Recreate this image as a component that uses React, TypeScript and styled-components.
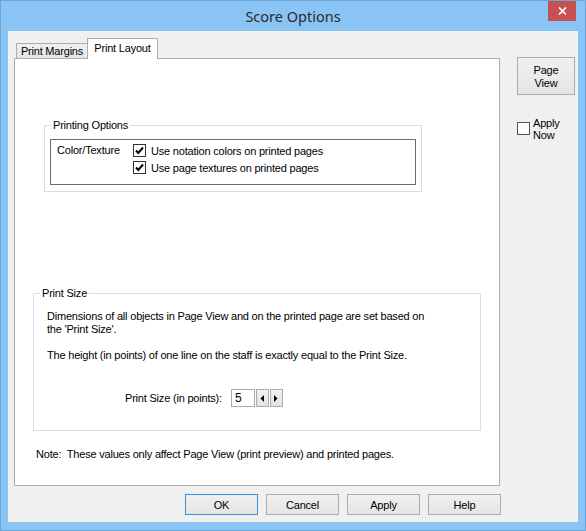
import React from 'react';
import styled, { createGlobalStyle } from 'styled-components';

const GlobalStyle = createGlobalStyle`
  html, body { margin: 0; padding: 0; background: #8ac4f5; }
  body { font-family: "Liberation Sans", Arial, sans-serif; font-size: 11px; color: #000; }
  * { box-sizing: border-box; }
`;

const Window = styled.div`
  width: 586px;
  height: 531px;
  background: #8ac4f5;
  border: 1px solid #6aa5da;
  padding: 0 7px 8px 7px;
  display: flex;
  flex-direction: column;
`;

const TitleBar = styled.div`
  height: 30px;
  display: grid;
  grid-template-columns: 1fr auto 1fr;
  align-items: start;
`;

const Title = styled.div`
  grid-column: 2;
  font-family: "Noto Sans", "Open Sans", sans-serif;
  font-size: 14.5px;
  line-height: 30px;
  color: #2b2b2b;
`;

const CloseButton = styled.div`
  grid-column: 3;
  justify-self: end;
  margin-right: 2px;
  width: 28px;
  height: 20px;
  background: #c75050;
  display: flex;
  align-items: center;
  justify-content: center;
`;

const Client = styled.div`
  flex: 1;
  background: #f0f0f0;
  display: flex;
  gap: 16px;
  padding: 7px 3px 7px 6px;
`;

const MainColumn = styled.div`
  width: 487px;
  display: flex;
  flex-direction: column;
`;

const TabStrip = styled.div`
  height: 21px;
  margin-bottom: -1px;
  padding-left: 2px;
  display: flex;
  align-items: flex-end;
  position: relative;
  z-index: 1;
`;

const Tab = styled.div<{ $active?: boolean }>`
  height: ${p => (p.$active ? '21px' : '15px')};
  width: ${p => (p.$active ? '71px' : '72px')};
  margin-left: ${p => (p.$active ? '-1px' : '0')};
  margin-bottom: ${p => (p.$active ? '0' : '1px')};
  border: 1px solid #acacac;
  border-bottom: none;
  background: ${p => (p.$active ? '#ffffff' : 'linear-gradient(#f0f0f0, #e5e5e5)')};
  display: flex;
  align-items: center;
  justify-content: center;
  letter-spacing: -0.2px;
  padding-bottom: ${p => (p.$active ? '2px' : '0')};
`;

const Panel = styled.div`
  width: 486px;
  height: 428px;
  background: #ffffff;
  border: 1px solid #acacac;
  display: flex;
  flex-direction: column;
  align-items: flex-start;
`;

const Group = styled.fieldset<{ $left: number; $top: number; $width: number; $height?: number }>`
  margin: ${p => p.$top}px 0 0 ${p => p.$left}px;
  width: ${p => p.$width}px;
  ${p => (p.$height ? `height: ${p.$height}px;` : '')}
  padding: 0;
  border: 1px solid #dcdcdc;
  min-width: 0;
`;

const Legend = styled.legend`
  margin-left: 6px;
  padding: 0 2px;
  line-height: 14px;
  letter-spacing: -0.2px;
`;

const OptionsBox = styled.div`
  margin: 7px 0 6px 5px;
  width: 366px;
  height: 46px;
  border: 1px solid #6d6d6d;
  padding: 2px 0 0 6px;
  display: grid;
  grid-template-columns: 76px 1fr;
`;

const BoxLabel = styled.div`
  line-height: 17px;
  letter-spacing: -0.2px;
`;

const CheckList = styled.div`
  display: flex;
  flex-direction: column;
`;

const CheckRow = styled.label`
  height: 17px;
  display: flex;
  align-items: center;
  gap: 5px;
  letter-spacing: -0.2px;
`;

const Box = styled.span`
  width: 13px;
  height: 13px;
  border: 1px solid #333333;
  background: #ffffff;
  display: inline-flex;
  align-items: center;
  justify-content: center;
  flex: none;
`;

const SizeBody = styled.div`
  padding: 10px 13px 0 13px;
`;

const Para = styled.p<{ $gap?: number }>`
  margin: ${p => p.$gap ?? 0}px 0 0 0;
  line-height: 13px;
  letter-spacing: -0.2px;
  white-space: pre-line;
`;

const SizeRow = styled.div`
  margin: 27px 0 0 78px;
  height: 18px;
  display: flex;
  align-items: center;
`;

const SizeLabel = styled.span`
  letter-spacing: -0.2px;
  margin-right: 9px;
`;

const NumberBox = styled.div`
  width: 24px;
  height: 18px;
  border: 1px solid #acacac;
  background: #ffffff;
  font-size: 12px;
  line-height: 16px;
  padding-left: 3px;
`;

const SpinButton = styled.div`
  width: 13px;
  height: 18px;
  margin-left: 1px;
  border: 1px solid #acacac;
  background: linear-gradient(#f2f2f2, #e3e3e3);
  display: flex;
  align-items: center;
  justify-content: center;
`;

const Note = styled.div`
  margin: 17px 0 0 21px;
  line-height: 13px;
  letter-spacing: -0.2px;
`;

const ButtonRow = styled.div`
  margin-top: 8px;
  display: flex;
  justify-content: flex-end;
  gap: 8px;
`;

const Button = styled.div<{ $default?: boolean }>`
  width: 73px;
  height: 21px;
  border: 1px solid ${p => (p.$default ? '#3c8fdc' : '#acacac')};
  background: linear-gradient(#f0f0f0, #e5e5e5);
  display: flex;
  align-items: center;
  justify-content: center;
  letter-spacing: -0.2px;
`;

const SideColumn = styled.div`
  padding-top: 19px;
  display: flex;
  flex-direction: column;
`;

const TallButton = styled.div`
  width: 58px;
  height: 38px;
  border: 1px solid #acacac;
  background: linear-gradient(#f0f0f0, #e5e5e5);
  display: flex;
  align-items: center;
  justify-content: center;
  text-align: center;
  line-height: 13px;
  padding-top: 2px;
  letter-spacing: -0.2px;
`;

const ApplyNow = styled.label`
  margin-top: 22px;
  display: flex;
  align-items: flex-start;
  gap: 3px;
`;

const ApplyBox = styled(Box)`
  margin-top: 5px;
  border-color: #555555;
`;

const ApplyText = styled.span`
  line-height: 12px;
  letter-spacing: -0.2px;
`;

const Check = () => (
  <svg width="11" height="11" viewBox="0 0 11 11">
    <polyline points="2,5.5 4.3,8 9,2.5" fill="none" stroke="#000" strokeWidth="2" />
  </svg>
);

const Arrow = ({ dir }: { dir: 'left' | 'right' }) => (
  <svg width="4" height="7" viewBox="0 0 4 7">
    {dir === 'left' ? <polygon points="4,0 4,7 0.5,3.5" fill="#000" /> : <polygon points="0,0 0,7 3.5,3.5" fill="#000" />}
  </svg>
);

export default function App() {
  return (
    <>
      <GlobalStyle />
      <Window>
        <TitleBar>
          <Title>Score Options</Title>
          <CloseButton>
            <svg width="9" height="8" viewBox="0 0 9 8">
              <path d="M1 0.5 L8 7.5 M8 0.5 L1 7.5" stroke="#fff" strokeWidth="1.7" />
            </svg>
          </CloseButton>
        </TitleBar>
        <Client>
          <MainColumn>
            <TabStrip>
              <Tab>Print Margins</Tab>
              <Tab $active>Print Layout</Tab>
            </TabStrip>
            <Panel>
              <Group $left={29} $top={59} $width={378}>
                <Legend>Printing Options</Legend>
                <OptionsBox>
                  <BoxLabel>Color/Texture</BoxLabel>
                  <CheckList>
                    <CheckRow>
                      <Box><Check /></Box>
                      Use notation colors on printed pages
                    </CheckRow>
                    <CheckRow>
                      <Box><Check /></Box>
                      Use page textures on printed pages
                    </CheckRow>
                  </CheckList>
                </OptionsBox>
              </Group>
              <Group $left={18} $top={94} $width={448} $height={145}>
                <Legend>Print Size</Legend>
                <SizeBody>
                  <Para>{'Dimensions of all objects in Page View and on the printed page are set based on\nthe \'Print Size\'.'}</Para>
                  <Para $gap={13}>The height (in points) of one line on the staff is exactly equal to the Print Size.</Para>
                  <SizeRow>
                    <SizeLabel>Print Size (in points):</SizeLabel>
                    <NumberBox>5</NumberBox>
                    <SpinButton><Arrow dir="left" /></SpinButton>
                    <SpinButton><Arrow dir="right" /></SpinButton>
                  </SizeRow>
                </SizeBody>
              </Group>
              <Note>Note:&nbsp; These values only affect Page View (print preview) and printed pages.</Note>
            </Panel>
            <ButtonRow>
              <Button $default>OK</Button>
              <Button>Cancel</Button>
              <Button>Apply</Button>
              <Button>Help</Button>
            </ButtonRow>
          </MainColumn>
          <SideColumn>
            <TallButton>Page<br />View</TallButton>
            <ApplyNow>
              <ApplyBox />
              <ApplyText>Apply<br />Now</ApplyText>
            </ApplyNow>
          </SideColumn>
        </Client>
      </Window>
    </>
  );
}
